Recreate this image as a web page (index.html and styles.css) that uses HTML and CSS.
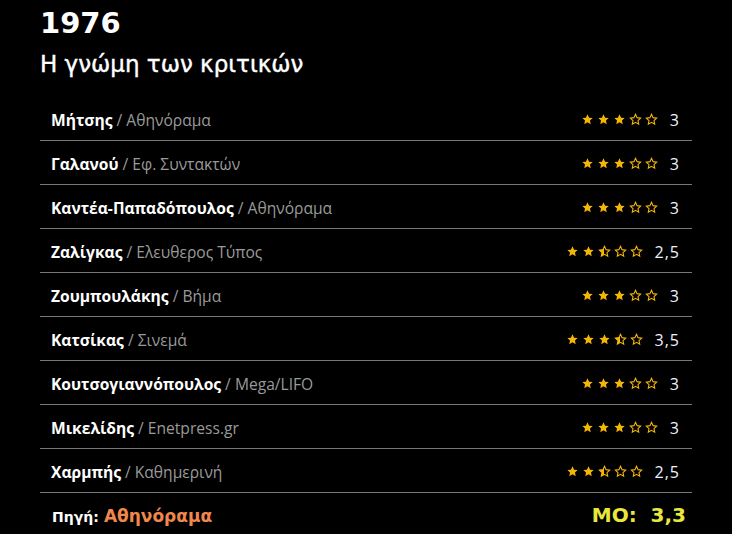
FILE: index.html
```html
<!DOCTYPE html>
<html lang="el">
<head>
<meta charset="utf-8">
<link rel="stylesheet" href="styles.css">
</head>
<body>
<svg class="defs" width="0" height="0" aria-hidden="true">
  <defs>
    <linearGradient id="half">
      <stop offset="50%" stop-color="#f5b60a"/>
      <stop offset="50%" stop-color="transparent"/>
    </linearGradient>
    <symbol id="star" viewBox="0 0 24 24">
      <path d="M12 2.5l2.9 6.1 6.6.8-4.9 4.6 1.3 6.6L12 17.3l-5.9 3.3 1.3-6.6L2.5 9.4l6.6-.8z"/>
    </symbol>
  </defs>
</svg>
<main class="wrap">
  <h1 class="year">1976</h1>
  <h2 class="subtitle">Η γνώμη των κριτικών</h2>
  <div class="list">
    <div class="row"><div class="who"><b>Μήτσης</b> / Αθηνόραμα</div><div class="score"><span class="stars"><svg class="s f"><use href="#star"/></svg><svg class="s f"><use href="#star"/></svg><svg class="s f"><use href="#star"/></svg><svg class="s o"><use href="#star"/></svg><svg class="s o"><use href="#star"/></svg></span><span class="num">3</span></div></div>
    <div class="row"><div class="who"><b>Γαλανού</b> / Εφ. Συντακτών</div><div class="score"><span class="stars"><svg class="s f"><use href="#star"/></svg><svg class="s f"><use href="#star"/></svg><svg class="s f"><use href="#star"/></svg><svg class="s o"><use href="#star"/></svg><svg class="s o"><use href="#star"/></svg></span><span class="num">3</span></div></div>
    <div class="row"><div class="who"><b>Καντέα-Παπαδόπουλος</b> / Αθηνόραμα</div><div class="score"><span class="stars"><svg class="s f"><use href="#star"/></svg><svg class="s f"><use href="#star"/></svg><svg class="s f"><use href="#star"/></svg><svg class="s o"><use href="#star"/></svg><svg class="s o"><use href="#star"/></svg></span><span class="num">3</span></div></div>
    <div class="row"><div class="who"><b>Ζαλίγκας</b> / Ελευθερος Τύπος</div><div class="score"><span class="stars"><svg class="s f"><use href="#star"/></svg><svg class="s f"><use href="#star"/></svg><svg class="s h"><use href="#star"/></svg><svg class="s o"><use href="#star"/></svg><svg class="s o"><use href="#star"/></svg></span><span class="num">2,5</span></div></div>
    <div class="row"><div class="who"><b>Ζουμπουλάκης</b> / Βήμα</div><div class="score"><span class="stars"><svg class="s f"><use href="#star"/></svg><svg class="s f"><use href="#star"/></svg><svg class="s f"><use href="#star"/></svg><svg class="s o"><use href="#star"/></svg><svg class="s o"><use href="#star"/></svg></span><span class="num">3</span></div></div>
    <div class="row"><div class="who"><b>Κατσίκας</b> / Σινεμά</div><div class="score"><span class="stars"><svg class="s f"><use href="#star"/></svg><svg class="s f"><use href="#star"/></svg><svg class="s f"><use href="#star"/></svg><svg class="s h"><use href="#star"/></svg><svg class="s o"><use href="#star"/></svg></span><span class="num">3,5</span></div></div>
    <div class="row"><div class="who"><b>Κουτσογιαννόπουλος</b> / Mega/LIFO</div><div class="score"><span class="stars"><svg class="s f"><use href="#star"/></svg><svg class="s f"><use href="#star"/></svg><svg class="s f"><use href="#star"/></svg><svg class="s o"><use href="#star"/></svg><svg class="s o"><use href="#star"/></svg></span><span class="num">3</span></div></div>
    <div class="row"><div class="who"><b>Μικελίδης</b> / Enetpress.gr</div><div class="score"><span class="stars"><svg class="s f"><use href="#star"/></svg><svg class="s f"><use href="#star"/></svg><svg class="s f"><use href="#star"/></svg><svg class="s o"><use href="#star"/></svg><svg class="s o"><use href="#star"/></svg></span><span class="num">3</span></div></div>
    <div class="row"><div class="who"><b>Χαρμπής</b> / Καθημερινή</div><div class="score"><span class="stars"><svg class="s f"><use href="#star"/></svg><svg class="s f"><use href="#star"/></svg><svg class="s h"><use href="#star"/></svg><svg class="s o"><use href="#star"/></svg><svg class="s o"><use href="#star"/></svg></span><span class="num">2,5</span></div></div>
  </div>
  <div class="foot">
    <div class="src"><span class="src-label">Πηγή:</span> <span class="src-name">Αθηνόραμα</span></div>
    <div class="avg">ΜΟ:&nbsp; 3,3</div>
  </div>
</main>
</body>
</html>
```
FILE: styles.css
```css
html, body {
  margin: 0;
  padding: 0;
  background: #000;
}
.defs { position: absolute; }
.wrap {
  width: 652px;
  padding-left: 40px;
  font-family: "DejaVu Sans", sans-serif;
  color: #fff;
}
.year {
  margin: 0;
  padding-top: 6px;
  font-size: 29px;
  line-height: 34px;
  font-weight: bold;
}
.subtitle {
  margin: 0;
  padding-top: 10px;
  font-size: 23px;
  line-height: 28px;
  font-weight: normal;
  height: 47px;
  -webkit-text-stroke: 0.4px #fff;
}
.list {
  display: flex;
  flex-direction: column;
}
.row {
  border-bottom: 1px solid #777;
  display: flex;
  align-items: center;
  justify-content: space-between;
  padding: 2px 12px 0 11px;
  box-sizing: content-box;
  height: 41px;
}
.who {
  font-family: "Open Sans", sans-serif;
  font-size: 15.6px;
  color: #9a9a9a;
}
.who b {
  color: #fff;
  font-weight: 700;
}
.score {
  display: flex;
  align-items: center;
  gap: 12px;
}
.stars {
  display: flex;
  gap: 3px;
}
.s {
  width: 13px;
  height: 13px;
}
.s.f { fill: #f5b60a; }
.s.o { fill: none; stroke: #f5b60a; stroke-width: 2; }
.s.h { fill: url(#half); stroke: #f5b60a; stroke-width: 2; }
.num {
  font-family: "Open Sans", sans-serif;
  font-size: 16px;
  color: #eef2ff;
  letter-spacing: 1px;
}
.foot {
  display: flex;
  justify-content: space-between;
  align-items: baseline;
  padding: 10px 6px 0 12px;
}
.src-label {
  font-size: 14px;
  font-weight: bold;
  color: #fff;
}
.src-name {
  font-size: 17px;
  font-weight: bold;
  color: #f0874c;
}
.avg {
  font-size: 20px;
  font-weight: bold;
  color: #e8e83c;
}
```
